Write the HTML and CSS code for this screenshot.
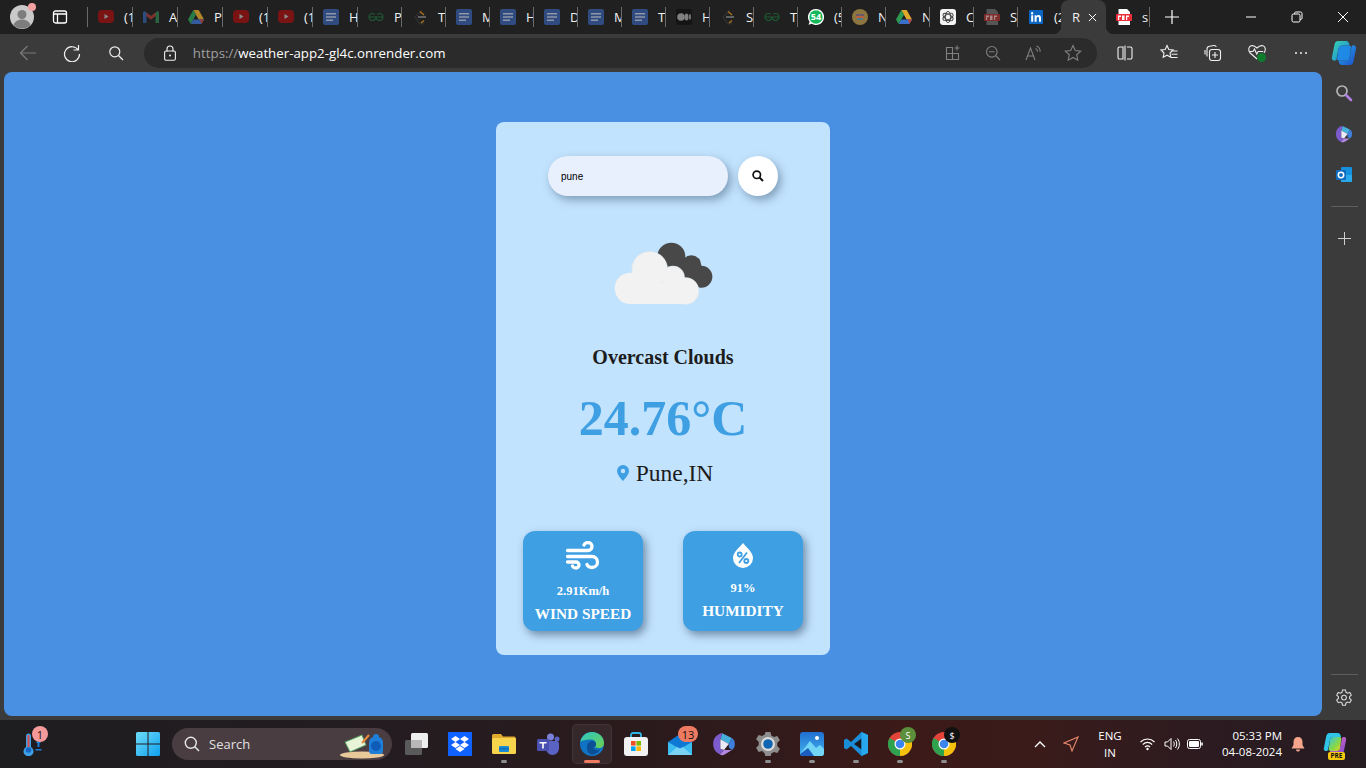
FILE: index.html
```html
<!DOCTYPE html>
<html lang="en">
<head>
<meta charset="utf-8">
<title>Weather App</title>
<link rel="stylesheet" href="styles.css">
</head>
<body>
<svg class="defs" width="0" height="0" aria-hidden="true">
  <defs>
    <symbol id="yt" viewBox="0 0 16 16"><rect y="1" width="16" height="13" rx="4" fill="#7a1414"/><path d="M6.500 5v5l4-2.500z" fill="#8a8a8a"/></symbol>
    <symbol id="gmail" viewBox="0 0 16 16"><path d="M0 4v10h3.500V7L8 10.500V7L2 2.500C1 2 0 2.800 0 4z" fill="#2f5b9c"/><path d="M16 4v10h-3.500V7L8 10.500V7l6-4.500C15 2 16 2.800 16 4z" fill="#2f7a4c"/><path d="M3.500 3.500 8 7l4.500-3.500V7L8 10.500 3.500 7z" fill="#a4352c"/></symbol>
    <symbol id="drive" viewBox="0 0 16 16"><path d="M5.300 1h5.400L16 10.500h-5.300z" fill="#e0a92c"/><path d="M5.300 1 0 10.500 2.700 15 8 5.700z" fill="#2d9a54"/><path d="M2.700 15h10.600L16 10.500H5.300z" fill="#3b6fc9"/><path d="M13.300 15 16 10.500h-4z" fill="#c4453a"/></symbol>
    <symbol id="doc" viewBox="0 0 16 16"><rect width="16" height="16" rx="2" fill="#2f4b80"/><path d="M3 4h10v1.500H3zM3 7.200h10v1.500H3zM3 10.400h7v1.500H3z" fill="#8d97a8"/></symbol>
    <symbol id="gfg" viewBox="0 0 16 16"><path d="M1 8h14M8 8a3.500 3.500 0 1 1-1.200-2.700M8 8a3.500 3.500 0 1 0 1.200-2.700M8 8a3.500 3.500 0 0 1-6.200 2.200M8 8a3.500 3.500 0 0 0 6.200 2.200" fill="none" stroke="#1d5c33" stroke-width="1.100"/></symbol>
    <symbol id="lc" viewBox="0 0 16 16"><path d="M10 1 3 8l4 5.500c1.500 1.500 3.500 1.500 5 .5" fill="none" stroke="#2e2e2e" stroke-width="1.600"/><path d="M8 2.500 12 6" fill="none" stroke="#a8701c" stroke-width="1.500"/><path d="M9 14l3-2.500" fill="none" stroke="#a8701c" stroke-width="1.500"/><path d="M6 8h8" stroke="#777" stroke-width="1.500"/></symbol>
    <symbol id="medium" viewBox="0 0 16 16"><rect width="16" height="16" rx="2" fill="#141414"/><circle cx="5" cy="8" r="3.800" fill="#808080"/><ellipse cx="10.500" cy="8" rx="2" ry="3.600" fill="#808080"/><ellipse cx="14" cy="8" rx=".9" ry="3.200" fill="#808080"/></symbol>
    <symbol id="wa" viewBox="0 0 16 16"><path d="M8 0a8 8 0 1 1-4.300 14.700L.5 15.800l1.100-3A8 8 0 0 1 8 0z" fill="#fff"/><circle cx="8" cy="8" r="6.700" fill="#16b85a"/></symbol>
    <symbol id="avatar" viewBox="0 0 16 16"><circle cx="8" cy="8" r="8" fill="#8f7640"/><rect x="4" y="5" width="8" height="2" fill="#6a5b66"/><rect x="4" y="7" width="8" height="2" fill="#b8613c"/><rect x="5" y="9" width="6" height="2" fill="#4d7c86"/></symbol>
    <symbol id="gpt" viewBox="0 0 16 16"><rect width="16" height="16" rx="3" fill="#f4f4f4"/><g fill="none" stroke="#3a3a3a" stroke-width=".9"><ellipse cx="8" cy="8" rx="5.600" ry="2.700" transform="rotate(30 8 8)"/><ellipse cx="8" cy="8" rx="5.600" ry="2.700" transform="rotate(-30 8 8)"/><ellipse cx="8" cy="8" rx="5.600" ry="2.700" transform="rotate(90 8 8)"/></g></symbol>
    <symbol id="pdfdim" viewBox="0 0 16 16"><path d="M2.500 0H11l3 3v13H2.500z" fill="#555"/><rect y="5" width="16" height="7" rx="1" fill="#7e2c2c"/><path d="M2 6.500h3v1.500H3.200V11H2zM6 6.500h2.500v4.500H6zM10 6.500h3V8h-1.800v3H10z" fill="#a98b8b"/></symbol>
    <symbol id="pdf" viewBox="0 0 16 16"><path d="M2.500 0H11l3 3v13H2.500z" fill="#fff"/><rect y="5" width="16" height="7" rx="1" fill="#ed2f3c"/><path d="M2 6.500h3v1.500H3.200V11H2zM6 6.500h2.500v4.500H6zM10 6.500h3V8h-1.800v3H10z" fill="#fff"/></symbol>
    <symbol id="li" viewBox="0 0 16 16"><rect width="16" height="16" rx="1" fill="#0a66c2"/><path d="M2.500 6h2.300v7.500H2.500zM3.600 2.300a1.300 1.300 0 1 1 0 2.700 1.300 1.300 0 0 1 0-2.700zM6.400 6h2.200v1c.5-.8 1.300-1.200 2.300-1.200 2 0 2.800 1.200 2.800 3.400v4.300h-2.300V9.700c0-1-.3-1.800-1.300-1.800s-1.400.8-1.400 1.800v3.800H6.400z" fill="#fff"/></symbol>
    <linearGradient id="cpa" x1="0" y1="0" x2="1" y2="1"><stop offset="0" stop-color="#38d6b0"/><stop offset="1" stop-color="#1a7fe0"/></linearGradient>
    <linearGradient id="cpb" x1="0" y1="0" x2="1" y2="1"><stop offset="0" stop-color="#29a8ee"/><stop offset="1" stop-color="#1b50c8"/></linearGradient>
    <linearGradient id="cpc" x1="0" y1="0" x2="1" y2="1"><stop offset="0" stop-color="#30c8e8"/><stop offset=".6" stop-color="#8cd640"/><stop offset="1" stop-color="#f4d82c"/></linearGradient>
    <linearGradient id="cpd" x1="0" y1="0" x2="1" y2="1"><stop offset="0" stop-color="#f070b0"/><stop offset="1" stop-color="#7a48d8"/></linearGradient>
    <symbol id="copilot" viewBox="0 0 26 26"><path d="M7 1h8c1.500 0 2.500.8 3 2.500l.5 2H11C9 5.500 8 7 7.500 9L5.500 19c-.3 1.500-1.500 2-3 1.500C1 20 .6 18.500 1 17L3.500 4.500C4 2.500 5 1 7 1z" fill="url(#cpa)"/><path d="M19 25h-8c-1.500 0-2.500-.8-3-2.500l-.5-2H15c2 0 3-1.500 3.500-3.500l2-10c.3-1.500 1.500-2 3-1.500 1.500.5 1.900 2 1.500 3.500L22.500 21.500C22 23.500 21 25 19 25z" fill="url(#cpb)"/><path d="M11 5.500h7.500L20 6.500 18.500 17c-.4 2-1.500 3.500-3.500 3.500H7.500L6 19.500 7.500 9C8 7 9 5.500 11 5.500z" fill="#1f8ae6"/></symbol>
    <symbol id="copilot-pre" viewBox="0 0 26 26"><path d="M7 1h9c1.500 0 2.500.8 3 2.500l.5 2H11C9 5.500 8 7 7.500 9L5.500 19c-.3 1.500-1.500 2-3 1.500C1 20 .6 18.500 1 17L3.500 4.500C4 2.500 5 1 7 1z" fill="#2fc4e8"/><path d="M19 25h-8c-1.500 0-2.500-.8-3-2.500l-.5-2H15c2 0 3-1.500 3.500-3.500l2-10c.3-1.500 1.500-2 3-1.500 1.500.5 1.900 2 1.500 3.500L22.500 21.500C22 23.500 21 25 19 25z" fill="url(#cpd)"/><path d="M11 5.500h7.500L20 6.500 18.500 17c-.4 2-1.500 3.500-3.500 3.500H7.500L6 19.500 7.500 9C8 7 9 5.500 11 5.500z" fill="url(#cpc)"/></symbol>
    <symbol id="ms-copilot" viewBox="0 0 20 20"><path d="M8.500 1 16.500 5 14 10 7 6z" fill="#46b0dc"/><path d="M16.500 5c1.700 1 2.500 2.500 2.500 5s-.8 4-2.500 5L14 13v-3z" fill="#3f7fdc"/><path d="M16.500 15l-6 3.800c-1.500.8-3 .6-4-.3L10 15h4z" fill="#b488e0"/><path d="M6.500 18.500C3 17 1 14 1 10s2-7 5.500-8.500c.7-.4 1.400-.5 2-.5L7 6v8l3 1z" fill="#7c5ccc"/><path d="M7 6l7 4-4 5-3-1z" fill="#eceaf6"/></symbol>
    <symbol id="chrome" viewBox="0 0 24 24"><circle cx="12" cy="12" r="12" fill="#e2443a"/><path d="M12 12 22.400 6A12 12 0 0 1 12 24z" fill="#f4c20d"/><path d="M12 12 12 24A12 12 0 0 1 1.600 6z" fill="#2ea24f"/><circle cx="12" cy="12" r="5.500" fill="#fff"/><circle cx="12" cy="12" r="4.300" fill="#3c85f0"/></symbol>
  </defs>
</svg>

<div class="tabstrip">
  <div class="profile">
    <svg class="ic-24" viewBox="0 0 24 24"><circle cx="12" cy="12" r="12" fill="#c9c9c9"/><circle cx="12" cy="9.500" r="4.500" fill="#7d7d7d"/><path d="M3.500 20c1.500-4 5-5.500 8.500-5.500s7 1.500 8.500 5.500A12 12 0 0 1 3.500 20z" fill="#7d7d7d"/></svg>
    <span class="profile-dot"></span>
  </div>
  <div class="vtabs-btn">
    <svg class="ic-16" viewBox="0 0 16 16"><rect x="1.500" y="2" width="13" height="12" rx="2" fill="none" stroke="#fff" stroke-width="1.300"/><path d="M1.500 5h13M5.500 5v9" fill="none" stroke="#fff" stroke-width="1.300"/></svg>
  </div>
  <div class="tabs">
    <div class="tab tab-first"><svg class="fav"><use href="#yt"/></svg><span class="tab-text">(1</span></div>
    <div class="tab tab-wide"><svg class="fav dim"><use href="#gmail"/></svg><span class="tab-text">A</span></div>
    <div class="tab tab-wide"><svg class="fav dim"><use href="#drive"/></svg><span class="tab-text">P:</span></div>
    <div class="tab tab-wide"><svg class="fav"><use href="#yt"/></svg><span class="tab-text">(1</span></div>
    <div class="tab tab-wide"><svg class="fav"><use href="#yt"/></svg><span class="tab-text">(1</span></div>
    <div class="tab tab-wide"><svg class="fav"><use href="#doc"/></svg><span class="tab-text">H</span></div>
    <div class="tab"><svg class="fav"><use href="#gfg"/></svg><span class="tab-text">P</span></div>
    <div class="tab"><svg class="fav"><use href="#lc"/></svg><span class="tab-text">T</span></div>
    <div class="tab"><svg class="fav"><use href="#doc"/></svg><span class="tab-text">M</span></div>
    <div class="tab"><svg class="fav"><use href="#doc"/></svg><span class="tab-text">H</span></div>
    <div class="tab"><svg class="fav"><use href="#doc"/></svg><span class="tab-text">D</span></div>
    <div class="tab"><svg class="fav"><use href="#doc"/></svg><span class="tab-text">M</span></div>
    <div class="tab"><svg class="fav"><use href="#doc"/></svg><span class="tab-text">T</span></div>
    <div class="tab"><svg class="fav"><use href="#medium"/></svg><span class="tab-text">H</span></div>
    <div class="tab"><svg class="fav"><use href="#lc"/></svg><span class="tab-text">S</span></div>
    <div class="tab"><svg class="fav"><use href="#gfg"/></svg><span class="tab-text">T</span></div>
    <div class="tab"><span class="fav-wrap"><svg class="fav"><use href="#wa"/></svg><span class="wa-count">54</span></span><span class="tab-text">(5</span></div>
    <div class="tab"><svg class="fav"><use href="#avatar"/></svg><span class="tab-text">N</span></div>
    <div class="tab"><svg class="fav"><use href="#drive"/></svg><span class="tab-text">N</span></div>
    <div class="tab"><svg class="fav"><use href="#gpt"/></svg><span class="tab-text">C</span></div>
    <div class="tab"><svg class="fav"><use href="#pdfdim"/></svg><span class="tab-text">S</span></div>
    <div class="tab tab-nosep"><svg class="fav-small"><use href="#li"/></svg><span class="tab-text">(2</span></div>
    <div class="tab-active"><span class="tab-text-active">R</span>
      <svg class="ic-10" viewBox="0 0 10 10"><path d="M1 1l8 8M9 1 1 9" stroke="#fff" stroke-width="1.100"/></svg>
    </div>
    <div class="tab tab-last"><svg class="fav"><use href="#pdf"/></svg><span class="tab-text">s</span></div>
    <div class="newtab"><svg class="ic-16" viewBox="0 0 16 16"><path d="M8 1v14M1 8h14" stroke="#fff" stroke-width="1.200"/></svg></div>
  </div>
  <div class="winctl">
    <div class="winbtn"><svg class="ic-10b" viewBox="0 0 12 12"><path d="M1 6h10" stroke="#fff" stroke-width="1"/></svg></div>
    <div class="winbtn"><svg class="ic-10b" viewBox="0 0 12 12"><rect x="1" y="3" width="8" height="8" rx="1.500" fill="none" stroke="#fff"/><path d="M3.500 3V2.500C3.500 1.500 4 1 5 1h4.500C10.500 1 11 1.500 11 2.500V7c0 1-.5 1.500-1.500 1.500H9" fill="none" stroke="#fff"/></svg></div>
    <div class="winbtn"><svg class="ic-10b" viewBox="0 0 12 12"><path d="M1 1l10 10M11 1 1 11" stroke="#fff" stroke-width="1"/></svg></div>
  </div>
</div>

<div class="toolbar">
  <div class="navbtn nav-back"><svg class="ic-18" viewBox="0 0 18 18"><path d="M17 9H1.500M8.500 2 1.500 9l7 7" fill="none" stroke="#7a7a7a" stroke-width="1.200"/></svg></div>
  <div class="navbtn"><svg class="ic-18" viewBox="0 0 18 18"><path d="M15.500 1v5h-5M15.200 6A7.500 7.500 0 1 0 16.500 10" fill="none" stroke="#f0f0f0" stroke-width="1.200"/></svg></div>
  <div class="navbtn"><svg class="ic-16" viewBox="0 0 16 16"><circle cx="6.800" cy="6.800" r="5" fill="none" stroke="#f0f0f0" stroke-width="1.200"/><path d="M10.500 10.500 15 15" stroke="#f0f0f0" stroke-width="1.300"/></svg></div>
  <div class="addressbar">
    <svg class="ic-lock" viewBox="0 0 12 16"><path d="M3 6.500V4a3 3 0 0 1 6 0v2.500" fill="none" stroke="#f0f0f0" stroke-width="1.100"/><rect x=".6" y="6" width="10.800" height="9.300" rx="1.500" fill="none" stroke="#f0f0f0" stroke-width="1.100"/><circle cx="6" cy="10.500" r="1" fill="#f0f0f0"/></svg>
    <span class="url"><span class="url-scheme">https://</span>weather-app2-gl4c.onrender.com</span>
    <div class="addr-icons">
      <div class="addr-ic"><svg class="ic-16" viewBox="0 0 16 16"><path d="M8 2.500H1.500v12h12V8M1.500 8.500h12M7.500 2.500v12M12 .5v5M9.500 3h5" fill="none" stroke="#808080" stroke-width="1.100"/></svg></div>
      <div class="addr-ic"><svg class="ic-16" viewBox="0 0 16 16"><circle cx="6.800" cy="6.800" r="5.300" fill="none" stroke="#808080" stroke-width="1.100"/><path d="M10.700 10.700 15 15M4 6.800h5.600" stroke="#808080" stroke-width="1.100"/></svg></div>
      <div class="addr-ic"><svg class="ic-16" viewBox="0 0 16 16"><path d="M1 15 5.500 3l4.500 12M2.700 11h5.600M10.500 3.500c1.300.6 2 1.700 2 3.200M11.500 1c2.300 1 3.700 3 3.700 5.700" fill="none" stroke="#808080" stroke-width="1.100"/></svg></div>
      <div class="addr-ic"><svg class="ic-18" viewBox="0 0 18 18"><path d="M9 1.500l2.300 5 5.400.6-4 3.700 1.100 5.400L9 13.500l-4.800 2.700 1.100-5.400-4-3.700 5.400-.6z" fill="none" stroke="#808080" stroke-width="1.100"/></svg></div>
    </div>
  </div>
  <div class="tool-icons">
    <div class="tool-ic"><svg class="ic-16" viewBox="0 0 16 16"><path d="M6 2H2.500A1.500 1.500 0 0 0 1 3.500v9A1.500 1.500 0 0 0 2.500 14H6zM10 2h3.500A1.500 1.500 0 0 1 15 3.500v9a1.500 1.500 0 0 1-1.500 1.500H10M8 .5v15" fill="none" stroke="#f0f0f0" stroke-width="1.100"/></svg></div>
    <div class="tool-ic"><svg class="ic-18" viewBox="0 0 18 18"><path d="M7 1.500l1.800 4 4.200.5-3 3 .8 4.300L7 11.200l-3.800 2.100.8-4.300-3-3 4.200-.5zM12 7h5.500M11.500 10.200h6M10.800 13.500h6.700" fill="none" stroke="#f0f0f0" stroke-width="1.100"/></svg></div>
    <div class="tool-ic"><svg class="ic-18" viewBox="0 0 18 18"><path d="M3 12.500V5c0-1.500 1-2.500 2.500-2.700L10 1.500c1-.1 2 .5 2.200 1.500M1 10.500V6" fill="none" stroke="#f0f0f0" stroke-width="1.100"/><rect x="5.500" y="5.500" width="11" height="11" rx="2.500" fill="none" stroke="#f0f0f0" stroke-width="1.100"/><path d="M11 8v6M8 11h6" stroke="#f0f0f0" stroke-width="1.100"/></svg></div>
    <div class="tool-ic tool-health"><svg class="ic-20" viewBox="0 0 20 20"><path d="M10 16 3.200 10C.8 7.500 1.500 3.600 4 2.800 6 2.200 8 3 10 5c2-2 4-2.800 6-2.200 2.500.8 3.200 4.500 1 7M1.800 8.500H6L7.500 6l2.200 5 1.500-2.500h5" fill="none" stroke="#f0f0f0" stroke-width="1.100"/><circle cx="14.500" cy="14.500" r="4.500" fill="#0f7b2c"/></svg></div>
    <div class="tool-ic"><span class="dots"><i></i><i></i><i></i></span></div>
    <div class="tool-ic tool-cp"><svg class="ic-26"><use href="#copilot"/></svg></div>
  </div>
</div>

<div class="middle">
  <main class="page">
    <section class="card">
      <div class="searchrow">
        <input class="search-input" type="text" value="pune">
        <button class="search-btn" type="button" aria-label="Search">
          <svg class="ic-12" viewBox="0 0 12 12"><circle cx="4.800" cy="4.800" r="3.700" fill="none" stroke="#111" stroke-width="1.700"/><path d="M7.500 7.500 11 11" stroke="#111" stroke-width="2"/></svg>
        </button>
      </div>
      <svg class="cloud" viewBox="280 305 305 195">
        <g fill="#484848"><circle cx="455" cy="352" r="42"/><circle cx="515" cy="378" r="30"/><circle cx="545" cy="412" r="33"/><rect x="450" y="360" width="90" height="80"/></g>
        <g fill="#f2f2f2" stroke="#dfe9ef" stroke-width="5"><circle cx="390" cy="390" r="52"/><circle cx="460" cy="415" r="33"/><circle cx="497" cy="455" r="39"/></g>
        <g fill="#f2f2f2"><circle cx="390" cy="390" r="52"/><circle cx="460" cy="415" r="33"/><circle cx="497" cy="455" r="39"/><circle cx="332" cy="447" r="47"/><rect x="332" y="430" width="165" height="64"/></g>
      </svg>
      <h2 class="desc">Overcast Clouds</h2>
      <h1 class="temp">24.76°C</h1>
      <div class="place">
        <svg class="pin" viewBox="0 0 12 16"><path fill-rule="evenodd" d="M6 0a6 6 0 0 1 6 6c0 3-3.500 7.500-6 10C3.500 13.500 0 9 0 6a6 6 0 0 1 6-6zm0 3.800a2.200 2.200 0 1 0 0 4.400 2.200 2.200 0 0 0 0-4.400z" fill="#3f9fe3"/></svg>
        <span>Pune,IN</span>
      </div>
      <div class="stats">
        <div class="stat stat-wind">
          <svg class="wind" viewBox="0 0 34 29"><path d="M1.500 9.500H22a4 4 0 0 0 0-8c-2 0-3.500 1-4 2.500M1.500 15.500H26a5.500 5.500 0 0 1 0 11c-2.500 0-4.500-1.500-5-3M1.500 21H10a3 3 0 0 1 0 6c-1.500 0-3-.7-3.500-2" fill="none" stroke="#fff" stroke-width="3.300" stroke-linecap="round"/></svg>
          <div class="stat-val">2.91Km/h</div>
          <div class="stat-label">WIND SPEED</div>
        </div>
        <div class="stat stat-hum">
          <svg class="drop" viewBox="0 0 20 25"><path d="M10 0c3 4 10 9 10 15a10 10 0 0 1-20 0C0 9 7 4 10 0z" fill="#fff"/><g fill="none" stroke="#3f9fe3" stroke-width="1.800"><circle cx="6.700" cy="11.500" r="2"/><circle cx="13.300" cy="18" r="2"/><path d="M14 9.500 6 20"/></g></svg>
          <div class="stat-val">91%</div>
          <div class="stat-label">HUMIDITY</div>
        </div>
      </div>
    </section>
  </main>
  <aside class="sidebar">
    <div class="side-ic"><svg class="ic-18" viewBox="0 0 18 18"><circle cx="7" cy="7" r="5" fill="none" stroke="#b5b5b5" stroke-width="1.700"/><path d="M11 11l5 5" stroke="#b07fe0" stroke-width="2.600" stroke-linecap="round"/></svg></div>
    <div class="side-ic"><svg class="ic-18"><use href="#ms-copilot"/></svg></div>
    <div class="side-ic"><svg class="ic-18" viewBox="0 0 18 18"><rect x="6" y="1" width="11" height="15" rx="1" fill="#1490df"/><path d="M6 9h11v6a1 1 0 0 1-1 1H7a1 1 0 0 1-1-1z" fill="#28a8ea"/><rect x="1" y="4" width="10" height="10" rx="1" fill="#0f6cbd"/><circle cx="6" cy="9" r="2.700" fill="none" stroke="#fff" stroke-width="1.500"/></svg></div>
    <div class="side-div"></div>
    <div class="side-ic side-plus"><svg class="ic-12b" viewBox="0 0 13 13"><path d="M6.500 0v13M0 6.500h13" stroke="#cfcfcf" stroke-width="1"/></svg></div>
    <div class="side-div side-div-low"></div>
    <div class="side-ic side-gear"><svg class="ic-18" viewBox="0 0 18 18"><path d="M7.500 1h3l.5 2.300 1.600.9 2.200-.7 1.500 2.600-1.700 1.600v1.800l1.700 1.600-1.500 2.600-2.200-.7-1.600.9-.5 2.300h-3L7 13.900l-1.600-.9-2.200.7-1.500-2.600 1.700-1.600V7.700L1.700 6.100l1.500-2.600 2.200.7L7 3.300z" fill="none" stroke="#d8d8d8" stroke-width="1.100"/><circle cx="9" cy="8.600" r="2.400" fill="none" stroke="#d8d8d8" stroke-width="1.100"/></svg></div>
  </aside>
</div>

<footer class="taskbar">
  <div class="tb-weather">
    <svg class="thermo" viewBox="0 0 22 24"><path d="M5 2a2.500 2.500 0 0 1 5 0v11a5 5 0 1 1-5 0z" transform="translate(-1 2)" fill="#3fa0e8"/><rect x="5.500" y="3" width="2" height="12" fill="#d94f4f"/><circle cx="6.500" cy="18" r="2.800" fill="#1667c4"/><path d="M14 11h5l-2.500-3zM15.500 11h2v4h-2zM13.500 17h6v1.500h-6z" fill="#1f7fd8"/></svg>
    <span class="badge badge-pink">1</span>
  </div>
  <div class="tb-start">
    <svg class="winlogo" viewBox="0 0 24 24"><defs><linearGradient id="wl" x1="0" y1="0" x2="1" y2="1"><stop offset="0" stop-color="#6fdcf8"/><stop offset="1" stop-color="#0fa0ee"/></linearGradient></defs><path d="M0 1.500A1.500 1.500 0 0 1 1.500 0h10v11.500H0zM12.500 0h10A1.500 1.500 0 0 1 24 1.500v10H12.500zM0 12.500h11.500V24h-10A1.500 1.500 0 0 1 0 22.500zM12.500 12.500H24v10a1.500 1.500 0 0 1-1.500 1.500h-10z" fill="url(#wl)"/></svg>
  </div>
  <div class="tb-search">
    <svg class="ic-16" viewBox="0 0 16 16"><circle cx="6.800" cy="6.800" r="5.500" fill="none" stroke="#e6e6e6" stroke-width="1.400"/><path d="M10.800 10.800 15 15" stroke="#e6e6e6" stroke-width="1.500"/></svg>
    <span class="tb-search-text">Search</span>
    <svg class="search-art" viewBox="0 0 46 28"><ellipse cx="22" cy="24" rx="22" ry="3.500" fill="#e8c99a"/><path d="M5 11 22 4l4 10-16 7z" fill="#e8f4d8" stroke="#4f9a5a"/><path d="M22 12l7-8" stroke="#e88a3c" stroke-width="2"/><path d="M33 6c0-2 1-3 3-3s3 1 3 3c3 1 4 3 4 6v8c0 2-1 3-3 3h-8c-2 0-3-1-3-3v-8c0-3 1-5 4-6z" fill="#1f7fd8"/><circle cx="36" cy="15" r="5" fill="#0f5cb8"/></svg>
  </div>
  <div class="tb-app">
    <svg class="ic-24" viewBox="0 0 24 24"><rect x="1" y="8" width="17" height="15" rx="1.500" fill="#5a5a5a"/><rect x="7" y="1" width="17" height="15" rx="1.500" fill="#eee"/><rect x="7" y="8" width="11" height="8" fill="#b8b8b8"/></svg>
  </div>
  <div class="tb-app">
    <svg class="ic-24" viewBox="0 0 24 24"><rect width="24" height="24" fill="#0f62fe"/><path d="M7.500 4 12 7 7.500 10 3 7zM16.500 4 21 7l-4.500 3L12 7zM7.500 10 12 13l-4.500 3L3 13zM16.500 10 21 13l-4.500 3L12 13zM7.500 17 12 14l4.500 3L12 20z" fill="#fff"/></svg>
  </div>
  <div class="tb-app tb-run">
    <svg class="ic-24" viewBox="0 0 24 24"><path d="M0 3.500A1.500 1.500 0 0 1 1.500 2H9l2 2.500h11.500L24 6v2H0z" fill="#e0a82e"/><rect y="6" width="24" height="16" rx="1.500" fill="#f8d44c"/><rect x="7" y="14" width="10" height="6" rx="1" fill="#1a8ad4"/><rect x="7" y="16" width="10" height="1.500" fill="#0f6cbd"/></svg>
  </div>
  <div class="tb-app">
    <svg class="ic-24" viewBox="0 0 24 24"><circle cx="14.500" cy="5" r="3.500" fill="#7b83d8"/><circle cx="21" cy="7" r="2.500" fill="#5a62c4"/><path d="M10 9h10a3 3 0 0 1 3 3v4c0 4-3 7-6.500 7S10 20 10 16z" fill="#5a62c4"/><rect x="1" y="7" width="12" height="12" rx="1.500" fill="#4a50b0"/><path d="M3.500 10h7v1.500H7.800V16.500H6.200V11.500H3.500z" fill="#fff"/></svg>
  </div>
  <div class="tb-edge">
    <svg class="ic-24b" viewBox="0 0 24 24"><defs><linearGradient id="eg" x1="0" y1="0" x2="1" y2="1"><stop offset="0" stop-color="#2bc7c9"/><stop offset="1" stop-color="#6ed04c"/></linearGradient></defs><circle cx="12" cy="12" r="12" fill="#1173c4"/><path d="M.3 10C1.500 4 6 0 12 0c7 0 12 5 12 11 0 3-2 5-5 5-2.500 0-4-1-4-1 1-1 1-2 1-3 0-2.500-2-4.500-5-4.500-5 0-9.500 1-10.700 2.500z" fill="url(#eg)"/><path d="M7 15c0-3.500 2.500-6 5.500-6 2 0 3.500 1.500 3.500 3 0 1.500-1 3-3 3.500 1 2 4 3 7 2-2 3.500-5 5-8 5-3 0-5-3-5-7.500z" fill="#0c4f94"/></svg>
    <span class="edge-bar"></span>
  </div>
  <div class="tb-app">
    <svg class="ic-24" viewBox="0 0 24 24"><path d="M7 6V3a2 2 0 0 1 2-2h6a2 2 0 0 1 2 2v3" fill="none" stroke="#2fb4e8" stroke-width="1.800"/><rect y="5" width="24" height="19" rx="3" fill="#f2f2f2"/><rect x="7" y="9" width="4.600" height="4.600" fill="#f25022"/><rect x="12.400" y="9" width="4.600" height="4.600" fill="#7fba00"/><rect x="7" y="14.400" width="4.600" height="4.600" fill="#00a4ef"/><rect x="12.400" y="14.400" width="4.600" height="4.600" fill="#ffb900"/></svg>
  </div>
  <div class="tb-app">
    <svg class="ic-24" viewBox="0 0 24 24"><path d="M12 2 24 10v13H0V10z" fill="#0f78d4"/><path d="M0 10l12 7 12-7v13H0z" fill="#3dbcf0"/><path d="M0 23l9-8 3 1.500 3-1.500 9 8z" fill="#7ad3f5"/></svg>
    <span class="badge badge-orange">13</span>
  </div>
  <div class="tb-app"><svg class="ic-24"><use href="#ms-copilot"/></svg></div>
  <div class="tb-app tb-run">
    <svg class="ic-24" viewBox="0 0 24 24"><path d="M9.500 0h5l.8 3.500 2.600 1.500 3.500-1 2.500 4.300-2.600 2.400v3.600l2.600 2.400-2.500 4.300-3.500-1-2.600 1.500-.8 3.500h-5l-.8-3.500L6.100 19l-3.500 1L.1 15.700l2.600-2.400v-3.600L.1 7.300l2.500-4.300 3.500 1 2.600-1.500z" fill="#8d8d8d"/><circle cx="12" cy="12" r="7" fill="#dcdcdc"/><circle cx="12" cy="12" r="4.800" fill="#1164b4"/></svg>
  </div>
  <div class="tb-app tb-run">
    <svg class="ic-24" viewBox="0 0 24 24"><defs><linearGradient id="ph" x1="0" y1="0" x2="0" y2="1"><stop offset="0" stop-color="#1f6fd0"/><stop offset="1" stop-color="#46b4ee"/></linearGradient></defs><rect width="24" height="24" rx="3" fill="url(#ph)"/><circle cx="17" cy="6" r="2" fill="#fff"/><path d="M0 22 10 9l6 7 4-3 4 4v4a3 3 0 0 1-3 3H3z" fill="#72d5f5"/><path d="M0 22l8-6 6 8H3a3 3 0 0 1-3-2z" fill="#1a5fc0"/></svg>
  </div>
  <div class="tb-app tb-run">
    <svg class="ic-24" viewBox="0 0 24 24"><path d="M17.500 0 24 3v18l-6.500 3L7 14l-4.500 3.500L0 16V8l2.500-1.500L7 10z" fill="#1a8ed8"/><path d="M17.500 6.500 10 12l7.500 5.500z" fill="#1c1a1e"/><path d="M17.500 0 24 3v18l-6.500 3z" fill="#27a7ee"/></svg>
  </div>
  <div class="tb-app tb-run">
    <svg class="ic-24"><use href="#chrome"/></svg>
    <span class="chrome-badge cb-green">S</span>
  </div>
  <div class="tb-app tb-run">
    <svg class="ic-24"><use href="#chrome"/></svg>
    <span class="chrome-badge cb-black">$</span>
  </div>
  <div class="tray">
    <svg class="tray-caret" viewBox="0 0 12 8"><path d="M1 7l5-5 5 5" fill="none" stroke="#fff" stroke-width="1.400"/></svg>
    <svg class="tray-loc" viewBox="0 0 16 16"><path d="M15 1 1 7l6 2 2 6z" fill="none" stroke="#e8896e" stroke-width="1.100"/></svg>
    <div class="tray-lang"><span>ENG</span><span>IN</span></div>
    <svg class="tray-wifi" viewBox="0 0 16 14"><path d="M1 5c4-4 10-4 14 0M3.300 7.500c3-2.700 6.400-2.700 9.400 0M5.500 10c1.500-1.400 3.500-1.400 5 0" fill="none" stroke="#fff" stroke-width="1.100"/><circle cx="8" cy="12" r="1.200" fill="#fff"/></svg>
    <svg class="tray-vol" viewBox="0 0 17 14"><path d="M1 5v4h2.500L7 12.500v-11L3.500 5z" fill="none" stroke="#fff"/><path d="M9.500 4.500c1 1.500 1 3.500 0 5M11.500 3c1.700 2.500 1.700 5.500 0 8M13.500 1.500c2.500 3.500 2.500 7.500 0 11" fill="none" stroke="#fff"/></svg>
    <svg class="tray-bat" viewBox="0 0 16 10"><rect x=".5" y=".5" width="13" height="9" rx="2" fill="none" stroke="#fff"/><rect x="2" y="2" width="10" height="6" rx="1" fill="#fff"/><rect x="14.300" y="3.500" width="1.500" height="3" fill="#fff"/></svg>
    <div class="tray-clock"><span>05:33 PM</span><span>04-08-2024</span></div>
    <svg class="tray-bell" viewBox="0 0 14 16"><path d="M7 1c3 0 4.500 2 4.500 5v3l2 3.500H.5L2.500 9V6C2.500 3 4 1 7 1z" fill="#f4a58c"/><path d="M5 13.500h4c0 1.500-1 2-2 2s-2-.5-2-2z" fill="#f4a58c"/></svg>
    <div class="tray-cp">
      <svg class="ic-24"><use href="#copilot-pre"/></svg>
      <span class="pre">PRE</span>
    </div>
  </div>
</footer>
</body>
</html>
```

FILE: styles.css
```css
* { box-sizing: border-box; }
html, body { margin: 0; padding: 0; height: 100%; }
body {
  width: 1366px;
  height: 768px;
  overflow: hidden;
  display: flex;
  flex-direction: column;
  background: #3b3b3b;
  font-family: "Open Sans", "Noto Sans", sans-serif;
  color: #fff;
}
svg { display: block; flex: none; }
.defs { position: absolute; }
.ic-10 { width: 9px; height: 9px; }
.ic-10b { width: 12px; height: 12px; }
.ic-12 { width: 12px; height: 12px; }
.ic-12b { width: 13px; height: 13px; }
.ic-16 { width: 16px; height: 16px; }
.ic-18 { width: 18px; height: 18px; }
.ic-20 { width: 20px; height: 20px; }
.ic-24 { width: 24px; height: 24px; }
.ic-24b { width: 24px; height: 24px; }
.ic-26 { width: 26px; height: 26px; }
.ic-lock { width: 12px; height: 16px; }

/* tab strip */
.tabstrip { height: 34px; background: #202020; display: flex; align-items: center; flex: none; }
.profile { position: relative; width: 24px; height: 24px; margin-left: 10px; }
.profile-dot { position: absolute; top: -2px; right: -2px; width: 8px; height: 8px; border-radius: 50%; background: #f4a0a0; }
.vtabs-btn { margin-left: 18px; width: 16px; }
.tabs { display: flex; align-items: center; margin-left: 19px; height: 34px; }
.tab {
  width: 44px;
  height: 20px;
  display: flex;
  align-items: center;
  gap: 10px;
  padding-left: 10px;
  border-right: 1px solid #6a6a6a;
  overflow: hidden;
  flex: none;
}
.tab-wide { width: 45px; }
.tab-first { border-left: 1px solid #6a6a6a; width: 46px; }
.tab-nosep { border-right: 0; width: 43px; padding-left: 11px; gap: 11px; }
.tab-last { width: 44px; }
.tab-text { font-size: 13px; line-height: 20px; white-space: nowrap; color: #f2f2f2; }
.fav { width: 16px; height: 16px; flex: none; }
.fav-small { width: 14px; height: 14px; flex: none; }
.dim { opacity: .75; }
.fav-wrap { position: relative; width: 16px; height: 16px; flex: none; }
.wa-count { position: absolute; inset: 0; font-size: 9px; font-weight: 700; line-height: 16px; text-align: center; color: #fff; }
.tab-active {
  position: relative;
  width: 45px;
  height: 34px;
  background: #3b3b3b;
  border-radius: 8px 8px 0 0;
  display: flex;
  align-items: center;
  padding-left: 11px;
  gap: 8px;
  flex: none;
}
.tab-active::before, .tab-active::after {
  content: "";
  position: absolute;
  bottom: 0;
  width: 8px;
  height: 8px;
}
.tab-active::before { left: -8px; background: radial-gradient(circle at 0 0, #202020 8px, #3b3b3b 8.500px); }
.tab-active::after { right: -8px; background: radial-gradient(circle at 100% 0, #202020 8px, #3b3b3b 8.500px); }
.tab-text-active { font-size: 13px; color: #f2f2f2; }
.newtab { margin-left: 14px; width: 16px; }
.winctl { margin-left: auto; display: flex; }
.winbtn { width: 46px; height: 34px; display: flex; align-items: center; justify-content: center; }

/* toolbar */
.toolbar { height: 38px; background: #3b3b3b; display: flex; align-items: center; flex: none; padding-left: 6px; }
.navbtn { width: 44px; height: 30px; display: flex; align-items: center; justify-content: center; }
.addressbar {
  margin-left: 6px;
  width: 954px;
  height: 30px;
  border-radius: 15px;
  background: #2b2b2b;
  display: flex;
  align-items: center;
  padding-left: 20px;
}
.url { margin-left: 17px; font-size: 13.300px; color: #fff; white-space: nowrap; }
.url-scheme { color: #a0a0a0; }
.addr-icons { margin-left: auto; display: flex; margin-right: 4px; }
.addr-ic { width: 40px; height: 30px; display: flex; align-items: center; justify-content: center; }
.tool-icons { display: flex; margin-left: 6px; }
.tool-ic { width: 44px; height: 30px; display: flex; align-items: center; justify-content: center; }
.dots { display: flex; gap: 3px; }
.dots i { width: 2px; height: 2px; background: #f0f0f0; border-radius: 50%; display: block; }
.tool-cp { margin-left: -1px; }

/* middle */
.middle { height: 644px; display: flex; flex: none; padding-left: 4px; }
.page {
  width: 1318px;
  background: #4a90e2;
  border-radius: 8px;
  display: flex;
  justify-content: center;
  align-items: flex-start;
  padding-top: 50px;
}
.card {
  width: 334px;
  height: 533px;
  background: #c2e3fd;
  border-radius: 8px;
  display: flex;
  flex-direction: column;
  align-items: center;
  padding: 34px 27px 24px;
  font-family: "Liberation Serif", serif;
  color: #1c1c1c;
}
.searchrow { display: flex; gap: 10px; }
.search-input {
  width: 180px;
  height: 40px;
  border: 0;
  border-radius: 20px;
  background: #e8f0fe;
  padding: 0 13px;
  font: 10px "Liberation Sans", sans-serif;
  color: #000;
  box-shadow: 3px 4px 8px rgba(60, 90, 120, .5);
  outline: 0;
}
.search-btn {
  width: 40px;
  height: 40px;
  border: 0;
  border-radius: 50%;
  background: #fff;
  padding: 0;
  display: flex;
  align-items: center;
  justify-content: center;
  box-shadow: 3px 4px 8px rgba(60, 90, 120, .5);
}
.cloud { width: 101.700px; height: 65px; margin: 45px 0 0 1px; }
.desc { margin: 40px 0 0; font-size: 20px; line-height: 22px; font-weight: 700; }
.temp { margin: 22px 0 0; font-size: 50px; line-height: 57px; font-weight: 700; color: #3f9fe3; }
.place { margin-top: 12px; padding-left: 4px; display: flex; align-items: center; gap: 7px; font-size: 23.500px; line-height: 28px; }
.pin { width: 12px; height: 16px; }
.stats { margin-top: 44px; width: 100%; display: flex; justify-content: space-between; }
.stat {
  width: 120px;
  height: 100px;
  background: #3f9fe3;
  border-radius: 12px;
  box-shadow: 3px 4px 8px rgba(40, 70, 100, .55);
  color: #fff;
  display: flex;
  flex-direction: column;
  align-items: center;
  font-weight: 700;
}
.stat-wind { padding-top: 10px; }
.stat-hum { padding-top: 12px; }
.wind { width: 34px; height: 29px; }
.drop { width: 20px; height: 25px; }
.stat-val { font-size: 12.500px; line-height: 14px; margin-top: 13px; }
.stat-wind .stat-val { margin-top: 14px; }
.stat-label { font-size: 15.300px; line-height: 17px; margin-top: 7px; }

/* sidebar */
.sidebar { width: 44px; display: flex; flex-direction: column; align-items: center; padding-top: 12px; }
.side-ic { width: 44px; height: 18px; display: flex; align-items: center; justify-content: center; margin-bottom: 23px; }
.side-div { width: 27px; height: 1px; background: #5f5f5f; margin: -1px 0 22px; }
.side-plus { height: 18px; margin-bottom: 0; }
.side-div-low { margin: auto 0 0; }
.side-gear { margin: 14px 0 9px; }

/* taskbar */
.taskbar {
  height: 48px;
  margin-top: 4px;
  flex: none;
  display: flex;
  align-items: center;
  background: linear-gradient(90deg, #1e1d20 0%, #241c20 30%, #2c1a1c 50%, #3b1a18 66%, #3a1b1a 76%, #2c1b20 88%, #251c22 100%);
  position: relative;
}
.tb-weather { position: relative; width: 24px; height: 24px; margin-left: 22px; }
.thermo { width: 22px; height: 24px; }
.badge {
  position: absolute;
  border-radius: 50%;
  color: #111;
  display: flex;
  align-items: center;
  justify-content: center;
  font-family: "Open Sans", sans-serif;
}
.badge-pink { top: -6px; right: -2px; width: 16px; height: 16px; background: #f59a9a; font-size: 11px; }
.badge-orange { top: 4px; right: 4px; width: 20px; height: 16px; border-radius: 8px; background: #ef7a62; font-size: 11px; }
.tb-start { margin-left: 90px; width: 24px; }
.winlogo { width: 24px; height: 24px; }
.tb-search {
  margin-left: 12px;
  width: 220px;
  height: 32px;
  border-radius: 16px;
  background: #4a3d42;
  display: flex;
  align-items: center;
  padding-left: 12px;
  gap: 9px;
  position: relative;
}
.tb-search-text { font-size: 13px; color: #e0e0e0; }
.search-art { position: absolute; right: 6px; bottom: 1px; width: 46px; height: 28px; }
.tb-app { position: relative; width: 44px; height: 44px; display: flex; align-items: center; justify-content: center; flex: none; }
.tb-search + .tb-app { margin-left: 2px; }
.tb-run::after { content: ""; position: absolute; bottom: 3px; left: 19px; width: 6px; height: 3px; border-radius: 2px; background: #8f8f8f; }
.tb-edge {
  position: relative;
  width: 40px;
  height: 40px;
  margin: 0 2px;
  display: flex;
  align-items: center;
  justify-content: center;
  flex: none;
  background: rgba(255, 255, 255, .06);
  border-radius: 5px;
  border: 1px solid rgba(255, 255, 255, .06);
}
.edge-bar { position: absolute; bottom: 0; left: 11px; width: 16px; height: 3px; border-radius: 2px; background: #ef7a62; }
.chrome-badge {
  position: absolute;
  top: 5px;
  right: 6px;
  width: 16px;
  height: 16px;
  border-radius: 50%;
  font-size: 9px;
  display: flex;
  align-items: center;
  justify-content: center;
  color: #fff;
}
.cb-green { background: #5b8f3c; }
.cb-black { background: #111; }
.tray { margin-left: auto; display: flex; align-items: center; height: 48px; }
.tray-caret { width: 12px; height: 8px; margin-right: 17px; }
.tray-loc { width: 16px; height: 16px; margin-right: 16px; }
.tray-lang { width: 30px; display: flex; flex-direction: column; align-items: center; font-size: 11.500px; line-height: 17px; margin-right: 14px; }
.tray-wifi { width: 17px; height: 14px; margin-right: 8px; }
.tray-vol { width: 17px; height: 14px; margin-right: 6px; }
.tray-bat { width: 16px; height: 10px; margin-right: 19px; }
.tray-clock { display: flex; flex-direction: column; align-items: flex-end; font-size: 11.500px; line-height: 16px; margin-right: 9px; }
.tray-bell { width: 14px; height: 16px; margin-right: 18px; }
.tray-cp { position: relative; width: 24px; height: 24px; margin-right: 19px; }
.pre { position: absolute; bottom: -4px; left: 5px; width: 17px; height: 8px; background: #f6c90e; color: #111; font-size: 6.500px; font-weight: 700; line-height: 8px; text-align: center; border-radius: 2px; }
```
